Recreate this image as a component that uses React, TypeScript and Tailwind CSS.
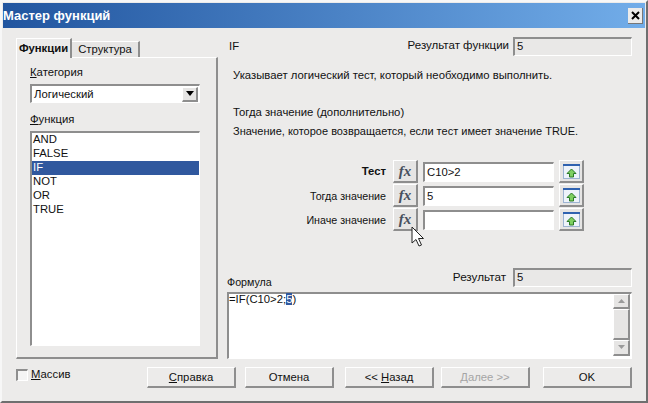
import React from 'react';

const raised = 'border-t border-l border-t-white border-l-white border-r-2 border-b-2 border-r-[#8e8e8e] border-b-[#8e8e8e]';
const sunken = 'border-t-2 border-l-2 border-t-[#8e8e8e] border-l-[#8e8e8e] border-r border-b border-r-white border-b-white';

const functions = ['AND', 'FALSE', 'IF', 'NOT', 'OR', 'TRUE'];

const DialogButton = ({ children, className = '' }: { children: React.ReactNode; className?: string }) => (
  <div className={`h-[21px] w-[89px] shrink-0 pt-px flex items-center justify-center bg-[#ecebea] ${raised} ${className}`}>
    {children}
  </div>
);

const FxButton = () => (
  <div className={`w-[25px] h-[23px] flex items-center justify-center bg-[#e6e5e4] ${raised}`}>
    <span className="font-['Liberation_Serif',serif] italic font-bold text-[15px] leading-none text-[#47505e]">fx</span>
  </div>
);

const ShrinkIcon = () => (
  <svg width="17" height="15" viewBox="0 0 17 15">
    <rect x="0.5" y="0.5" width="16" height="14" fill="#eef3fa" stroke="#9db4d2" />
    <rect x="0" y="0" width="17" height="2" fill="#2f62b0" />
    <path d="M8.5 5 L13 9.5 H10.5 V13 H6.5 V9.5 H4 Z" fill="#7ed060" stroke="#2a7a26" strokeWidth="1" />
  </svg>
);

const ArgRow = ({ label, value, bold }: { label: string; value: string; bold?: boolean }) => (
  <div className="flex items-center h-[24px]">
    <div className={`w-[159px] pt-px text-right text-[10.7px] ${bold ? 'font-bold text-[11.3px]' : ''}`}>{label}</div>
    <div className="ml-[7px]"><FxButton /></div>
    <div className={`ml-[5px] w-[131px] h-[20px] pt-px bg-white flex items-center pl-[2px] ${sunken}`}>{value}</div>
    <div className={`ml-[5px] w-[25px] h-[23px] flex items-center justify-center bg-[#e6e5e4] ${raised}`}>
      <ShrinkIcon />
    </div>
  </div>
);

const ResultField = ({ value }: { value: string }) => (
  <div className={`w-[119px] h-[19px] flex items-center pl-[2px] bg-[#e9e8e7] border-r-[#f6f6f6] border-b-[#f6f6f6] ${sunken}`}>{value}</div>
);

export default function App() {
  return (
    <div className="relative w-[648px] h-[403px] flex flex-col overflow-hidden bg-[#ecebea] border-2 border-[#f7f7f7] border-r-[#6f6f6f] border-b-[#6f6f6f] font-['Liberation_Sans',sans-serif] text-[11.3px] leading-none text-[#111]">
      {/* title bar */}
      <div className="h-[25px] mx-px mt-px shrink-0 flex items-center justify-between pr-[2px] bg-gradient-to-r from-[#21559f] to-[#72ade9]">
        <span className="text-white font-bold text-[13px]">Мастер функций</span>
        <div className="w-[15px] h-[16px] flex items-center justify-center bg-[#ecebea] border-r border-b border-[#777]">
          <svg width="9" height="9" viewBox="0 0 9 9">
            <path d="M1 1 L8 8 M8 1 L1 8" stroke="#000" strokeWidth="2" />
          </svg>
        </div>
      </div>

      {/* main area */}
      <div className="flex pt-[9px] pl-[14px] h-[331px] shrink-0">
        {/* left panel */}
        <div className="w-[202px] pt-px flex flex-col">
          <div className="flex items-end h-[19px] relative z-10">
            <div className="h-[20px] -mb-px w-[56px] flex items-center justify-center font-bold bg-[#ecebea] border-t border-l border-white border-r-2 border-r-[#8e8e8e]">Функции</div>
            <div className="h-[16px] w-[68px] flex items-center justify-center bg-[#e6e5e4] border-t border-t-white border-r-2 border-r-[#8e8e8e]">Структура</div>
          </div>
          <div className={`flex-1 flex flex-col pl-[13px] ${raised}`}>
            <div className="mt-[9px] h-[12px]"><span className="underline">К</span>атегория</div>
            <div className={`mt-[5px] w-[170px] h-[19px] pt-px bg-white flex items-center justify-between pl-[2px] ${sunken}`}>
              <span>Логический</span>
              <div className={`w-[16px] h-[15px] -mt-px flex items-center justify-center bg-[#e6e5e4] mr-px ${raised}`}>
                <svg width="8" height="5" viewBox="0 0 8 5"><path d="M0 0 H8 L4 5 Z" fill="#000" /></svg>
              </div>
            </div>
            <div className="mt-[11px] h-[12px]"><span className="underline">Ф</span>ункция</div>
            <div className={`mt-[5px] w-[170px] h-[215px] bg-white ${sunken}`}>
              {functions.map((name) => (
                <div
                  key={name}
                  className={`h-[14px] pl-[1px] flex items-center ${name === 'IF' ? 'bg-[#30589e] text-white' : ''}`}
                >
                  {name}
                </div>
              ))}
            </div>
          </div>
        </div>

        {/* right panel */}
        <div className="ml-[9px] w-[405px] flex flex-col">
          <div className="flex items-center h-[18px]">
            <span className="ml-[2px] mt-[2px]">IF</span>
            <span className="ml-auto mr-[4px] text-[11.5px]">Результат функции</span>
            <ResultField value="5" />
          </div>
          <div className="mt-[12px] h-[16px] pl-[6px] pt-px flex items-center">Указывает логический тест, который необходимо выполнить.</div>
          <div className="mt-[21px] h-[16px] pl-[6px] pt-px flex items-center">Тогда значение (дополнительно)</div>
          <div className="mt-[4px] h-[16px] pl-[6px] flex items-center text-[11px]">Значение, которое возвращается, если тест имеет значение TRUE.</div>
          <div className="mt-[20px]">
            <ArgRow label="Тест" value="C10>2" bold />
            <ArgRow label="Тогда значение" value="5" />
            <ArgRow label="Иначе значение" value="" />
          </div>
          <div className="mt-[36px] flex items-end h-[19px]">
            <span className="mb-[-1px] text-[10.7px]">Формула</span>
            <span className="ml-auto mr-[7px] self-center text-[11.7px]">Результат</span>
            <ResultField value="5" />
          </div>
          <div className={`mt-[5px] h-[68px] bg-white flex justify-between ${sunken}`}>
            <div>
              =IF(C10&gt;2;<span className="bg-[#30589e] text-white">5</span>)
            </div>
            <div className="w-[17px] h-[62px] flex flex-col bg-[#f0efee] mr-px">
              <div className={`h-[16px] flex items-center justify-center bg-[#e6e5e4] ${raised}`}>
                <svg width="7" height="4" viewBox="0 0 7 4"><path d="M3.5 0 L7 4 H0 Z" fill="#9a9a9a" /></svg>
              </div>
              <div className={`h-[32px] bg-[#e6e5e4] ${raised}`} />
              <div className={`mt-auto h-[16px] flex items-center justify-center bg-[#e6e5e4] ${raised}`}>
                <svg width="7" height="4" viewBox="0 0 7 4"><path d="M0 0 H7 L3.5 4 Z" fill="#9a9a9a" /></svg>
              </div>
            </div>
          </div>
        </div>
      </div>

      {/* bottom bar */}
      <div className="flex items-center mt-[8px] pl-[14px] h-[21px]">
        <div className="w-[131px] shrink-0 flex items-center -mt-[5px]">
          <div className={`w-[12px] h-[12px] bg-[#f4f4f4] ${sunken}`} />
          <span className="ml-[3px]"><span className="underline">М</span>ассив</span>
        </div>
        <DialogButton><span><span className="underline">С</span>правка</span></DialogButton>
        <DialogButton className="ml-[9px]">Отмена</DialogButton>
        <DialogButton className="ml-[11px]"><span>&lt;&lt; <span className="underline">Н</span>азад</span></DialogButton>
        <DialogButton className="ml-[7px] text-[#a5a5a5]"><span><span className="underline">Д</span>алее &gt;&gt;</span></DialogButton>
        <DialogButton className="ml-[13px] border-t-[#777] border-l-[#777]">OK</DialogButton>
      </div>

      {/* mouse pointer */}
      <svg className="absolute left-[409px] top-[224px]" width="14" height="22" viewBox="0 0 14 22">
        <path d="M1 1 V17 L5 13.5 L8 20 L10.5 19 L7.5 12.5 H12.5 Z" fill="#fff" stroke="#222" strokeWidth="1" />
      </svg>
    </div>
  );
}
